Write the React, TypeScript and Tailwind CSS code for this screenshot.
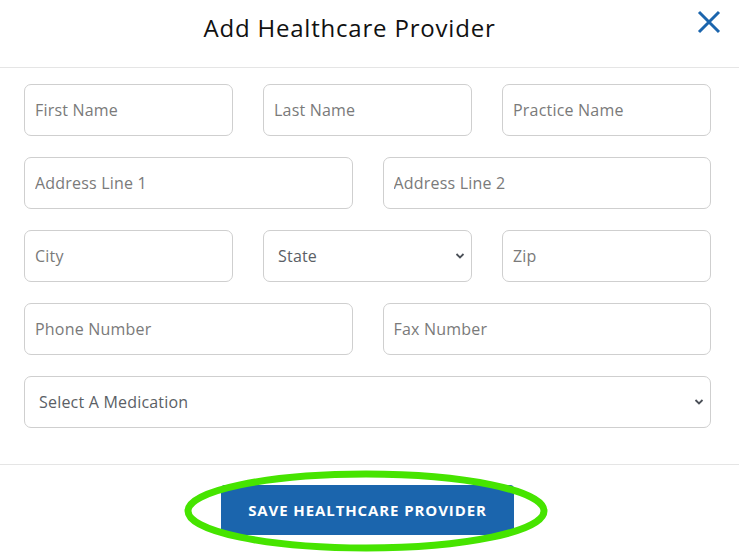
import React from "react";

const font = { fontFamily: '"Open Sans", "Noto Sans", sans-serif' };

function Field({ ph }: { ph: string }) {
  return (
    <input
      placeholder={ph}
      className="h-[52px] w-full rounded-[7px] border border-[#cfcfcf] bg-white px-[10px] text-[16px] tracking-[0.2px] text-[#333] placeholder:text-[#7a7a7a] outline-none"
    />
  );
}

function Select({ label }: { label: string }) {
  return (
    <div className="relative h-[52px] w-full rounded-[7px] border border-[#cfcfcf] bg-white">
      <div className="flex h-full items-center pl-[14px] text-[16px] tracking-[0.2px] text-[#5b5f66]">{label}</div>
      <svg className="absolute right-[6px] top-1/2 -translate-y-1/2" width="10" height="8" viewBox="0 0 10 8">
        <path d="M1.5 2 L5 5.5 L8.5 2" fill="none" stroke="#4b5058" strokeWidth="1.8" />
      </svg>
    </div>
  );
}

export default function App() {
  return (
    <div className="relative h-[553px] w-[739px] overflow-hidden bg-white" style={font}>
      <div className="relative flex h-[68px] justify-center border-b border-[#e5e5e5] pr-10 pt-[11px]">
        <h1 className="text-[24px] leading-[34px] font-normal tracking-[0.8px] text-[#111]">Add Healthcare Provider</h1>
        <svg className="absolute right-[18px] top-[10px]" width="24" height="24" viewBox="0 0 24 24">
          <path d="M2 2 L22 22 M22 2 L2 22" stroke="#1b65ad" strokeWidth="3" />
        </svg>
      </div>
      <div className="flex flex-col gap-[21px] pl-6 pr-7 pt-4 pb-9 border-b border-[#e5e5e5]">
        <div className="grid grid-cols-3 gap-[30px]">
          <Field ph="First Name" />
          <Field ph="Last Name" />
          <Field ph="Practice Name" />
        </div>
        <div className="grid grid-cols-2 gap-[30px]">
          <Field ph="Address Line 1" />
          <Field ph="Address Line 2" />
        </div>
        <div className="grid grid-cols-3 gap-[30px]">
          <Field ph="City" />
          <Select label="State" />
          <Field ph="Zip" />
        </div>
        <div className="grid grid-cols-2 gap-[30px]">
          <Field ph="Phone Number" />
          <Field ph="Fax Number" />
        </div>
        <Select label="Select A Medication" />
      </div>
      <div className="flex justify-center pt-[20px] pr-[4px]">
        <button className="h-[50px] w-[293px] rounded-[4px] bg-[#1b65ad] text-[15px] font-bold tracking-[0.9px] text-white">
          SAVE HEALTHCARE PROVIDER
        </button>
      </div>
      <svg className="pointer-events-none absolute left-[184px] top-[470px]" width="366" height="84" viewBox="0 0 366 84">
        <ellipse cx="182" cy="41" rx="178" ry="37" fill="none" stroke="#46e400" strokeWidth="7" />
      </svg>
    </div>
  );
}
